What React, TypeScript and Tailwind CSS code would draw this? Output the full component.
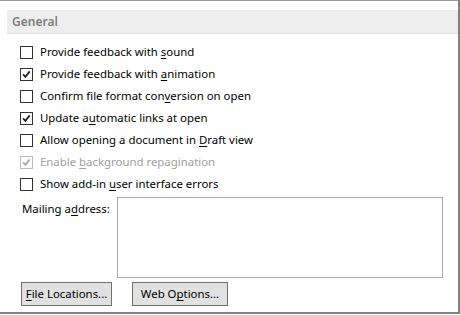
const font = { fontFamily: '"Noto Sans", "Liberation Sans", sans-serif' };

function Check({ disabled }: { disabled?: boolean }) {
  return (
    <svg viewBox="0 0 13 13" className="w-[13px] h-[13px]">
      <path
        d="M2.5 6.3 L5.2 9.3 L10.3 2.8"
        fill="none"
        stroke={disabled ? "#a8a8a8" : "#1e1e1e"}
        strokeWidth="2"
      />
    </svg>
  );
}

type Opt = { pre: string; key: string; post: string; checked?: boolean; disabled?: boolean };

const options: Opt[] = [
  { pre: "Provide feedback with ", key: "s", post: "ound" },
  { pre: "Provide feedback with ", key: "a", post: "nimation", checked: true },
  { pre: "Confirm file format con", key: "v", post: "ersion on open" },
  { pre: "Update a", key: "u", post: "tomatic links at open", checked: true },
  { pre: "Allow opening a document in ", key: "D", post: "raft view" },
  { pre: "Enable ", key: "b", post: "ackground repagination", checked: true, disabled: true },
  { pre: "Show add-in ", key: "u", post: "ser interface errors" },
];

export default function App() {
  return (
    <div
      className="w-[460px] h-[314px] bg-white border-t border-r-2 border-b-2 border-t-[#9a9a9a] border-r-[#828282] border-b-[#828282] text-[11.4px] text-black"
      style={font}
    >
      {/* section header */}
      <div className="mt-[9px] ml-[7px] h-[24px] bg-[#eeeeee] border-b border-[#e2e2e2] flex items-center pl-[5px]">
        <span className="font-semibold text-[#7d7d7d] text-[12px]">General</span>
      </div>

      <div className="mt-[7px] flex flex-col">
        {options.map((o, i) => (
          <div key={i} className="h-[22px] flex items-center pl-[20px]">
            <div
              className={
                "w-[13px] h-[13px] border flex items-center justify-center " +
                (o.disabled ? "border-[#bcbcbc]" : "border-[#333333]")
              }
            >
              {o.checked && <Check disabled={o.disabled} />}
            </div>
            <span className={"ml-[7px] leading-none " + (o.disabled ? "text-[#a0a0a0]" : "")}>
              {o.pre}
              <span className="underline underline-offset-2">{o.key}</span>
              {o.post}
            </span>
          </div>
        ))}
      </div>

      <div className="mt-[2px] flex">
        <span className="ml-[22px] mt-[3px] w-[95px]">
          Mailing a<span className="underline underline-offset-2">d</span>dress:
        </span>
        <div className="w-[326px] h-[81px] border border-[#ababab]" />
      </div>

      <div className="mt-[4px] ml-[21px] flex gap-[20px]">
        <button className="w-[91px] h-[24px] bg-[#e1e1e1] border border-[#707070] flex items-center justify-center">
          <span>
            <span className="underline underline-offset-2">F</span>ile Locations...
          </span>
        </button>
        <button className="w-[96px] h-[24px] bg-[#e1e1e1] border border-[#707070] flex items-center justify-center">
          <span>
            Web O<span className="underline underline-offset-2">p</span>tions...
          </span>
        </button>
      </div>
    </div>
  );
}
